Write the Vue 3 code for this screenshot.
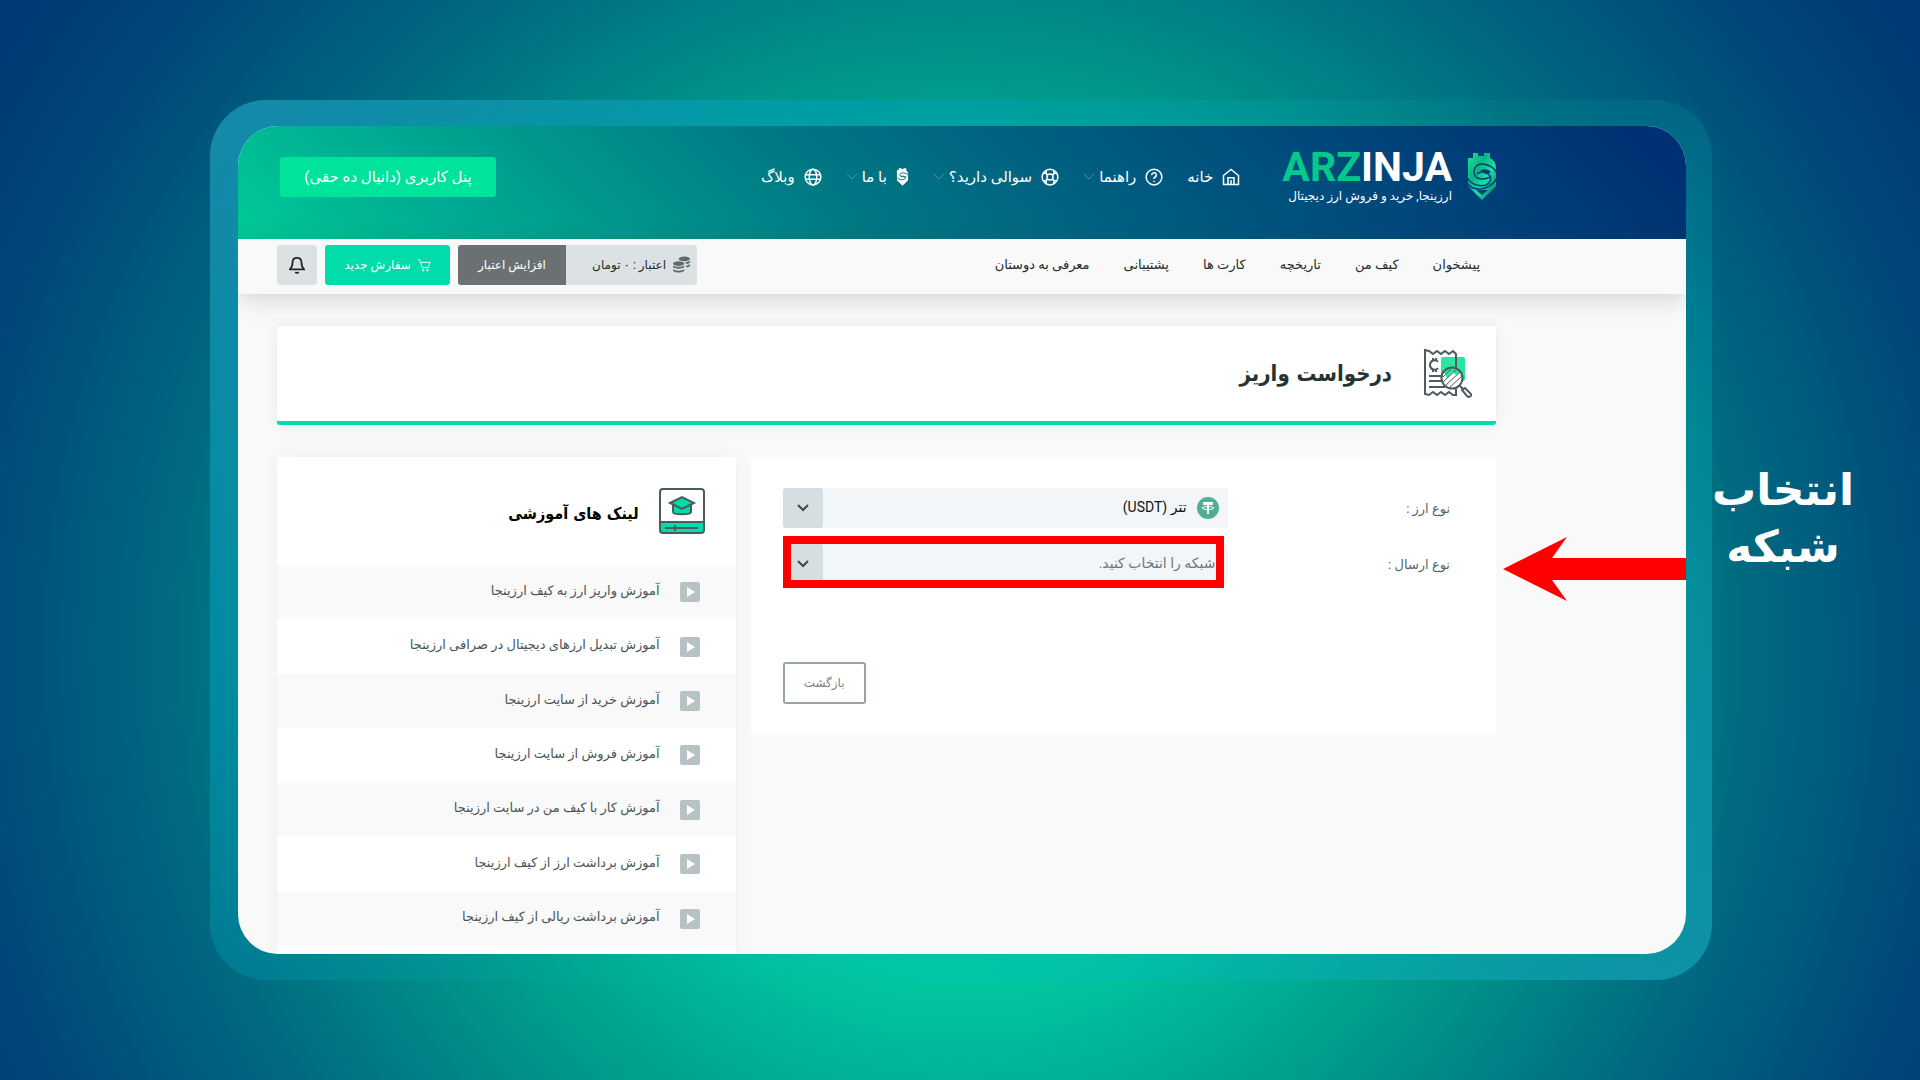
<template>
  <div class="stage" dir="rtl">
    <div class="frame">
      <div class="screen">
        <header class="top-bar">
          <a class="brand" href="#">
            <svg class="brand-mark" viewBox="0 0 30 49">
              <defs>
                <linearGradient id="mark" x1="0" y1="0" x2="1" y2="1">
                  <stop offset="0" stop-color="#19e08f" />
                  <stop offset="0.35" stop-color="#08b582" />
                  <stop offset="0.6" stop-color="#1fe0a4" />
                  <stop offset="0.8" stop-color="#07a67c" />
                  <stop offset="1" stop-color="#1ce0a0" />
                </linearGradient>
              </defs>
              <path fill="url(#mark)" d="M1 6h5V1h5v3h6V1h6v5c4 2 6 6 6 10v18L15 48 1 34z" />
              <g fill="none" stroke="#00407a" stroke-width="1.500">
                <path d="M30 21C25 12 12 9 8 16c-3 6 1 11 7 11 4 0 7-1 9-3" />
                <path d="M0 25c4 9 17 11 22 6 4-5 0-11-7-11-3 0-4 1-5 2" />
                <path d="M0 31c7 9 22 8 30-5" />
              </g>
              <path d="M13 19c3-3 9-2 11 1-3 3-7 2-9 0z" fill="#00407a" />
              <path d="M9 38h12l-6 5z" fill="#00407a" />
            </svg>
            <span class="brand-text">
              <span class="brand-name" dir="ltr"><span class="brand-green">ARZ</span>INJA</span>
              <span class="brand-tagline">ارزینجا, خرید و فروش ارز دیجیتال</span>
            </span>
          </a>

          <nav class="main-nav">
            <a v-for="item in mainNav" :key="item.label" href="#" class="main-link">
              <svg v-if="item.icon === 'home'" class="line-icon" viewBox="0 0 24 24">
                <path d="M2 10l10-8 10 8v12H2zM8 22v-9h8v9M12 16v6" />
              </svg>
              <svg v-else-if="item.icon === 'help'" class="line-icon" viewBox="0 0 24 24">
                <circle cx="12" cy="12" r="10.500" />
                <path d="M9 9.500a3 3 0 1 1 4 2.800c-.700.300-1 .900-1 1.700v.500M12 17v1.500" />
              </svg>
              <svg v-else-if="item.icon === 'support'" class="line-icon" viewBox="0 0 24 24">
                <circle cx="12" cy="12" r="10.500" />
                <circle cx="12" cy="12" r="4" />
                <path d="M7 3v5l2 1M3 7h5M17 3v5l-2 1M21 7h-5M7 21v-5l2-1M3 17h5M17 21v-5l-2-1M21 17h-5" />
              </svg>
              <svg v-else-if="item.icon === 'about'" class="about-icon" viewBox="0 0 14 20">
                <path fill="#fff" d="M1 3h2V1h3v1h2V1h3v2l2 3v8l-6 6-6-6z" />
                <path
                  d="M13 8C9 5 4 6 4 8s5 3 7 2M1 11c2 3 8 3 9 1s-3-3-5-2"
                  fill="none"
                  stroke="#00587e"
                />
              </svg>
              <svg v-else class="line-icon" viewBox="0 0 24 24">
                <circle cx="12" cy="12" r="10.500" />
                <ellipse cx="12" cy="12" rx="5" ry="10.500" />
                <path d="M2 9h20M2 15h20" />
              </svg>
              <span>{{ item.label }}</span>
              <svg v-if="item.menu" class="nav-chevron" viewBox="0 0 12 8">
                <path d="M1 1l5 5 5-5" />
              </svg>
            </a>
          </nav>

          <button type="button" class="panel-button">پنل کاربری (دانیال ده حقی)</button>
        </header>

        <div class="sub-bar">
          <nav class="sub-nav">
            <a v-for="label in subNav" :key="label" href="#">{{ label }}</a>
          </nav>
          <div class="actions">
            <div class="credit">
              <span class="credit-amount">
                <svg class="coins" viewBox="0 0 18 18">
                  <g fill="#5f6b6d">
                    <ellipse cx="12" cy="3" rx="6" ry="2.500" />
                    <path d="M13 6.500c2 0 4-.500 5-1.500v2c-.500 1-2 1.500-4 1.500zM14 10c2 0 3-.500 4-1.500v2c-.500 1-2 1.500-4 1.500z" />
                    <ellipse cx="6" cy="8" rx="6" ry="2.500" />
                    <path d="M0 10c2 2 10 2 12 0v2c-2 2-10 2-12 0zM0 14c2 2 10 2 12 0v1.500c-2 2.500-10 2.500-12 0z" />
                  </g>
                </svg>
                اعتبار : ۰ تومان
              </span>
              <button type="button" class="credit-add">افزایش اعتبار</button>
            </div>
            <button type="button" class="order-button">
              <svg class="cart" viewBox="0 0 16 16">
                <path d="M1 2h2l3 9h7l2-6H4.500" />
                <circle cx="7" cy="14" r="1" />
                <circle cx="12" cy="14" r="1" />
              </svg>
              سفارش جدید
            </button>
            <button type="button" class="bell-button" aria-label="اعلان ها">
              <svg class="bell" viewBox="0 0 18 20">
                <path d="M1 15c2-2 3-3 3-8 0-3 2-5 5-5s5 2 5 5c0 5 1 6 3 8z" />
                <path d="M7 18c1 1 3 1 4 0" />
              </svg>
            </button>
          </div>
        </div>

        <main class="content">
          <section class="title-card">
            <svg class="title-icon" viewBox="0 0 48 49">
              <rect x="17" y="8" width="24" height="24" rx="2" fill="#2be5a2" />
              <path
                d="M32 18V5l-3-3-4 3-4-3-4 3-4-3-4 3-4-3-4-1v44l4 1 4-3 4 3 4-3 4 3 4-3 4 3h3V39"
                class="ink"
              />
              <path d="M5 27h12M5 32h12M5 38h16" class="ink" />
              <path d="M14 13c-2-3-8-2-8 3s6 6 8 3M9 9v3M12 9v3M9 20v3M12 20v3" class="ink" />
              <circle cx="28" cy="29" r="11" fill="#fff" />
              <path d="M20 23c4-6 12-6 16 0l-4 3-3-3-6 6z" fill="#2be5a2" />
              <circle cx="28" cy="29" r="10.500" class="ink" />
              <path d="M19 28l8-8M19 33l14-13M22 36l14-13M26 38l12-11" class="ink hatch" />
              <path d="M36 37l3 3M38 41l3-2 6 6c1 2-2 4-4 2z" class="ink" />
            </svg>
            <h1>درخواست واریز</h1>
          </section>

          <div class="columns">
            <form class="deposit-card" @submit.prevent>
              <div class="field">
                <label for="coin">نوع ارز :</label>
                <div class="select-box">
                  <select id="coin" v-model="coin" class="with-icon">
                    <option value="usdt">تتر (USDT)</option>
                  </select>
                  <svg class="tether" viewBox="0 0 22 22">
                    <circle cx="11" cy="11" r="11" fill="#4fae94" />
                    <path fill="#fff" d="M6 5h10v3h-4v9h-2V8H6z" />
                    <ellipse cx="11" cy="11" rx="6" ry="1.500" fill="none" stroke="#fff" />
                  </svg>
                  <span class="select-arrow">
                    <svg viewBox="0 0 12 8"><path d="M1 1l5 5 5-5" /></svg>
                  </span>
                </div>
              </div>
              <div class="field">
                <label for="network">نوع ارسال :</label>
                <div class="select-box">
                  <select id="network" v-model="network" class="placeholder">
                    <option value="">شبکه را انتخاب کنید.</option>
                  </select>
                  <span class="select-arrow">
                    <svg viewBox="0 0 12 8"><path d="M1 1l5 5 5-5" /></svg>
                  </span>
                  <span class="highlight"></span>
                </div>
              </div>
              <button type="button" class="back-button">بازگشت</button>
            </form>

            <aside class="lessons">
              <div class="lessons-head">
                <svg class="lessons-icon" viewBox="0 0 46 46">
                  <path d="M1 34h44v8a3 3 0 0 1-3 3H4a3 3 0 0 1-3-3z" fill="#00dcaa" />
                  <path d="M14 17v7c0 3 18 3 18 0v-7" fill="#00dcaa" class="ink" />
                  <path d="M11 15l12-6 12 6-12 6z" fill="#00dcaa" class="ink" />
                  <rect x="1" y="1" width="44" height="44" rx="3" class="ink" />
                  <path d="M1 34h44M6 40h33M16 37v6" class="ink" />
                </svg>
                <h2>لینک های آموزشی</h2>
              </div>
              <ul>
                <li v-for="lesson in lessons" :key="lesson">
                  <a href="#">
                    <svg class="play" viewBox="0 0 20 20">
                      <rect width="20" height="20" rx="2" fill="#b6c2c4" />
                      <path d="M7 5l8 5-8 5z" fill="#fff" />
                    </svg>
                    <span>{{ lesson }}</span>
                  </a>
                </li>
              </ul>
            </aside>
          </div>
        </main>

        <svg class="pointer" viewBox="0 0 183 64">
          <path d="M0 32L64 0 49 21h134v22H49l15 21z" fill="#f00" />
        </svg>
      </div>
    </div>
    <p class="caption">انتخاب<br />شبکه</p>
  </div>
</template>

<script setup>
import { ref } from 'vue';

const coin = ref('usdt');
const network = ref('');

const mainNav = [
  { label: 'خانه', icon: 'home', menu: false },
  { label: 'راهنما', icon: 'help', menu: true },
  { label: 'سوالی دارید؟', icon: 'support', menu: true },
  { label: 'با ما', icon: 'about', menu: true },
  { label: 'وبلاگ', icon: 'globe', menu: false }
];

const subNav = ['پیشخوان', 'کیف من', 'تاریخچه', 'کارت ها', 'پشتیبانی', 'معرفی به دوستان'];

const lessons = [
  'آموزش واریز ارز به کیف ارزینجا',
  'آموزش تبدیل ارزهای دیجیتال در صرافی ارزینجا',
  'آموزش خرید از سایت ارزینجا',
  'آموزش فروش از سایت ارزینجا',
  'آموزش کار با کیف من در سایت ارزینجا',
  'آموزش برداشت ارز از کیف ارزینجا',
  'آموزش برداشت ریالی از کیف ارزینجا'
];
</script>

<style>
body {
  margin: 0;
}
</style>

<style scoped>
* {
  box-sizing: border-box;
}

.stage {
  display: flex;
  height: 100vh;
  padding: 100px 0 100px 210px;
  direction: ltr;
  background: radial-gradient(circle at 50% 60%, #00d2a4 0, #00c8a1 330px, #009a8c 560px, #006a80 790px, #00477a 1000px, #003a76 1120px);
  font-family: Roboto, "DejaVu Sans", sans-serif;
  font-size: 14px;
}

.frame {
  flex: 1;
  min-width: 0;
  padding: 26px 26px 26px 28px;
  border-radius: 56px;
  background: linear-gradient(135deg, rgba(32, 160, 190, 0.7) 0, rgba(0, 160, 190, 0.5) 25%, rgba(0, 190, 170, 0.06) 55%, rgba(0, 185, 190, 0.3) 75%, rgba(22, 165, 185, 0.7) 100%);
}

.screen {
  position: relative;
  display: flex;
  flex-direction: column;
  height: 100%;
  overflow: hidden;
  border-radius: 40px;
  background: #f9f9f9;
  direction: rtl;
}

a {
  color: inherit;
  text-decoration: none;
}

button,
select {
  font: inherit;
  border: 0;
  cursor: pointer;
}

.ink {
  stroke: #4c5b5d;
  stroke-width: 2;
}

.ink:not([fill]) {
  fill: none;
}

.hatch {
  stroke-width: 1;
}

.top-bar {
  display: flex;
  flex: none;
  align-items: center;
  height: 113px;
  padding: 0 189px 12px 42px;
  color: #fff;
  background: linear-gradient(45deg, #00ca96 0, #00a892 17%, #007a85 40%, #005f80 58%, #00437a 80%, #002c72 100%);
}

.brand {
  display: flex;
  align-items: center;
  gap: 15px;
}

.brand-mark {
  width: 30px;
  height: 49px;
}

.brand-text {
  display: flex;
  flex-direction: column;
  gap: 2px;
}

.brand-name {
  font-size: 41px;
  font-weight: 700;
  line-height: 36px;
}

.brand-green {
  color: #05c98a;
}

.brand-tagline {
  font-size: 12px;
  line-height: 18px;
}

.main-nav {
  display: flex;
  gap: 24px;
  margin-right: 42px;
  font-size: 15px;
}

.main-link {
  display: flex;
  align-items: center;
  gap: 9px;
}

.line-icon {
  width: 18px;
  height: 18px;
  fill: none;
  stroke: #fff;
  stroke-width: 2;
}

.about-icon {
  width: 13px;
  height: 19px;
}

.nav-chevron {
  width: 12px;
  height: 8px;
  margin-right: -5px;
  fill: none;
  stroke: #4d93a8;
}

.panel-button {
  width: 216px;
  height: 40px;
  margin-right: auto;
  border-radius: 3px;
  color: #fff;
  background: #00e39b;
  font-size: 15px;
}

.sub-bar {
  display: flex;
  flex: none;
  align-items: center;
  justify-content: space-between;
  height: 55px;
  padding: 0 206px 4px 39px;
  font-size: 12px;
  color: #222b2d;
  background: #f9f9f9;
  box-shadow: 0 4px 24px rgba(60, 75, 75, 0.22);
}

.sub-nav {
  display: flex;
  gap: 34px;
  font-size: 13px;
}

.actions {
  display: flex;
  gap: 8px;
}

.actions button {
  height: 40px;
}

.credit {
  display: flex;
  overflow: hidden;
  border-radius: 3px;
}

.credit-amount {
  display: flex;
  align-items: center;
  gap: 7px;
  width: 131px;
  padding-right: 7px;
  background: #dce2e4;
}

.coins {
  width: 17px;
  height: 17px;
}

.credit-add {
  width: 108px;
  color: #fff;
  background: #6b7173;
}

.order-button {
  display: flex;
  align-items: center;
  justify-content: center;
  gap: 6px;
  width: 125px;
  border-radius: 3px;
  color: #fff;
  background: #00dcaa;
}

.cart {
  width: 14px;
  height: 14px;
  fill: none;
  stroke: #fff;
}

.bell-button {
  display: grid;
  place-items: center;
  width: 40px;
  padding: 0;
  border-radius: 3px;
  background: #dce2e4;
}

.bell {
  width: 16px;
  height: 18px;
  fill: none;
  stroke: #202829;
  stroke-width: 2;
}

.content {
  display: flex;
  flex: 1;
  flex-direction: column;
  gap: 32px;
  min-height: 0;
  padding: 32px 190px 0 39px;
}

.title-card {
  display: flex;
  flex: none;
  align-items: center;
  gap: 32px;
  height: 99px;
  padding-right: 24px;
  border-bottom: 4px solid #00dcaa;
  border-radius: 3px;
  background: #fff;
  box-shadow: 0 0 12px rgba(60, 75, 75, 0.1);
}

.title-icon {
  width: 48px;
  height: 49px;
}

h1,
h2,
ul,
.caption {
  margin: 0;
}

h1,
h2 {
  font-family: "DejaVu Sans Condensed", "DejaVu Sans", sans-serif;
}

h1 {
  font-size: 22px;
  color: #263335;
}

.columns {
  display: grid;
  flex: 1;
  grid-template-columns: 746fr 459fr;
  gap: 15px;
  min-height: 0;
}

.deposit-card {
  align-self: start;
  display: flex;
  flex-direction: column;
  gap: 16px;
  padding: 31px 46px 31px 32px;
  border-radius: 3px;
  background: #fff;
}

.field {
  display: grid;
  grid-template-columns: 1fr 2fr;
  align-items: center;
  color: #566466;
  font-size: 13px;
}

.select-box {
  position: relative;
}

select {
  display: block;
  width: 100%;
  height: 40px;
  padding: 0 12px 2px 44px;
  border-radius: 3px;
  appearance: none;
  color: #111;
  background: #f3f6f8;
  font-size: 14px;
}

.with-icon {
  padding-right: 41px;
}

.placeholder {
  color: #6f7779;
}

.tether {
  position: absolute;
  top: 9px;
  right: 9px;
  width: 22px;
  height: 22px;
}

.select-arrow {
  position: absolute;
  top: 0;
  left: 0;
  display: grid;
  place-items: center;
  width: 40px;
  height: 40px;
  border-radius: 3px;
  background: #d5dfe1;
  pointer-events: none;
}

.select-arrow svg {
  width: 12px;
  height: 8px;
  fill: none;
  stroke: #3c484a;
  stroke-width: 2;
}

.highlight {
  position: absolute;
  inset: -8px 4px -4px 0;
  border: 8px solid #f00;
  pointer-events: none;
}

.back-button {
  align-self: flex-end;
  width: 83px;
  height: 42px;
  margin-top: 62px;
  border: 2px solid #98a3a4;
  border-radius: 3px;
  color: #7b8587;
  background: #fff;
  font-size: 12px;
}

.lessons {
  background: #fff;
  box-shadow: 0 0 16px rgba(60, 75, 75, 0.06);
}

.lessons-head {
  display: flex;
  align-items: center;
  gap: 20px;
  height: 108px;
  padding: 0 31px 0 0;
}

.lessons-icon {
  width: 46px;
  height: 46px;
}

h2 {
  padding-top: 4px;
  font-size: 16px;
  color: #000;
}

ul {
  display: grid;
  grid-auto-rows: 1fr;
  height: 381px;
  padding: 0;
  list-style: none;
}

li {
  display: flex;
  align-items: center;
  padding-right: 36px;
  color: #4a5658;
}

li:nth-child(odd) {
  background: #f9f9f9;
}

li a {
  display: flex;
  align-items: center;
  gap: 20px;
  font-size: 13px;
}

li span {
  padding-bottom: 4px;
}

.play {
  width: 20px;
  height: 20px;
}

.pointer {
  position: absolute;
  top: 411px;
  right: 0;
  width: 183px;
  height: 64px;
}

.caption {
  width: 208px;
  padding: 362px 66px 0 0;
  color: #fff;
  direction: rtl;
  font-size: 44px;
  font-weight: 700;
  line-height: 57px;
  text-align: center;
  white-space: nowrap;
}
</style>
